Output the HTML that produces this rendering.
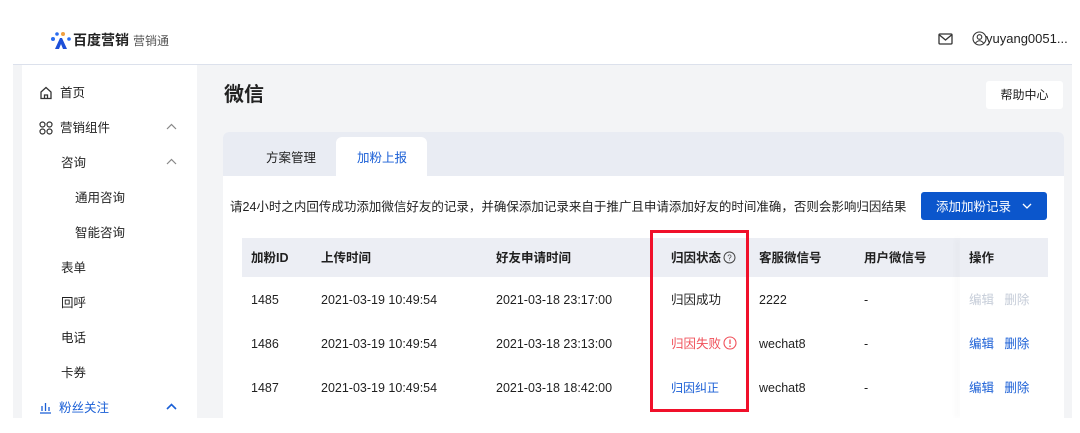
<!DOCTYPE html>
<html><head><meta charset="utf-8"><style>
*{margin:0;padding:0;box-sizing:border-box}
body{width:1080px;height:433px;background:#fff;font-family:"Liberation Sans","Noto Sans CJK SC",sans-serif;color:#1f1f1f;position:relative;overflow:hidden;font-size:12.5px}
.abs{position:absolute}
.t{position:absolute;white-space:nowrap;line-height:16px}
</style></head><body>
<svg class="abs" style="left:50px;top:31px" width="22" height="20" viewBox="0 0 22 20">
<circle cx="3" cy="8" r="2" fill="#2a6cf0"/><circle cx="7" cy="3" r="1.8" fill="#2a6cf0"/><circle cx="13" cy="3" r="2" fill="#f0a040"/><circle cx="19" cy="8" r="1.8" fill="#2a6cf0"/>
<path d="M10 7 L5 18 L9 18 L11 13 L13 18 L17 18 L12 7 Z" fill="#1d4fd8"/></svg>
<div class="t" style="left:73px;top:32px;font-size:14px;font-weight:bold;color:#222">百度营销</div>
<div class="t" style="left:133px;top:33px;font-size:12px;color:#555">营销通</div>
<svg class="abs" style="left:938px;top:33px" width="15" height="12" viewBox="0 0 15 12"><rect x="1" y="1" width="13" height="10" rx="1" fill="none" stroke="#333" stroke-width="1.3"/><path d="M1.5 2 L7.5 7 L13.5 2" fill="none" stroke="#333" stroke-width="1.3"/></svg>
<svg class="abs" style="left:972px;top:31px" width="15" height="15" viewBox="0 0 15 15"><circle cx="7.5" cy="7.5" r="6.5" fill="none" stroke="#333" stroke-width="1.1"/><circle cx="7.5" cy="6" r="2.3" fill="none" stroke="#333" stroke-width="1.1"/><path d="M3.5 12 Q7.5 7.5 11.5 12" fill="none" stroke="#333" stroke-width="1.1"/></svg>
<div class="t" style="left:986px;top:31px;font-size:13px;color:#222">yuyang0051...</div>
<div class="abs" style="left:13px;top:64px;width:1059px;height:1px;background:#dce1ec"></div>
<div class="abs" style="left:13px;top:65px;width:9px;height:353px;background:#f3f4f6"></div>
<div class="abs" style="left:197px;top:65px;width:875px;height:353px;background:#f3f4f6"></div>
<svg class="abs" style="left:39px;top:86px" width="14" height="14" viewBox="0 0 14 14"><path d="M2 6 L7 1.5 L12 6 V12.5 H2 Z M5.5 12.5 V9 H8.5 V12.5" fill="none" stroke="#333" stroke-width="1.3"/></svg>
<div class="t" style="left:60px;top:85px">首页</div>
<svg class="abs" style="left:39px;top:121px" width="14" height="14" viewBox="0 0 14 14"><g fill="none" stroke="#333" stroke-width="1.2"><circle cx="3.5" cy="3.5" r="2.5"/><circle cx="10.5" cy="3.5" r="2.5"/><circle cx="3.5" cy="10.5" r="2.5"/><circle cx="10.5" cy="10.5" r="2.5"/></g></svg>
<div class="t" style="left:60px;top:120px">营销组件</div>
<svg class="abs" style="left:166px;top:123px" width="11" height="7"><path d="M1 6 L5.5 1.5 L10 6" fill="none" stroke="#888" stroke-width="1.2"/></svg>
<div class="t" style="left:61px;top:155px">咨询</div>
<svg class="abs" style="left:166px;top:158px" width="11" height="7"><path d="M1 6 L5.5 1.5 L10 6" fill="none" stroke="#888" stroke-width="1.2"/></svg>
<div class="t" style="left:75px;top:190px">通用咨询</div>
<div class="t" style="left:75px;top:225px">智能咨询</div>
<div class="t" style="left:61px;top:260px">表单</div>
<div class="t" style="left:61px;top:295px">回呼</div>
<div class="t" style="left:61px;top:330px">电话</div>
<div class="t" style="left:61px;top:365px">卡券</div>
<svg class="abs" style="left:39px;top:402px" width="13" height="12" viewBox="0 0 13 12"><path d="M1 11 H12 M3 9 V4 M6.5 9 V1 M10 9 V5" stroke="#1a5fd6" stroke-width="1.3" fill="none"/></svg>
<div class="t" style="left:59px;top:400px;color:#1a5fd6">粉丝关注</div>
<svg class="abs" style="left:166px;top:403px" width="11" height="7"><path d="M1 6 L5.5 1.5 L10 6" fill="none" stroke="#1a5fd6" stroke-width="1.6"/></svg>
<div class="t" style="left:224px;top:84px;font-size:20px;line-height:22px;font-weight:bold;color:#222">微信</div>
<div class="abs" style="left:986px;top:81px;width:77px;height:28px;background:#fff;border-radius:3px;font-size:12px;text-align:center;line-height:28px">帮助中心</div>
<div class="abs" style="left:223px;top:132px;width:841px;height:286px;background:#fff;border-radius:6px 6px 0 0;overflow:hidden">
 <div class="abs" style="left:0;top:0;width:841px;height:44px;background:#e9ecf3"></div>
 <div class="abs" style="left:113px;top:5px;width:91px;height:40px;background:#fff;border-radius:6px 6px 0 0"></div>
 <div class="t" style="left:43px;top:18px">方案管理</div>
 <div class="t" style="left:134px;top:18px;color:#1a5fd6">加粉上报</div>
 <div class="t" style="left:7px;top:67px;font-size:12.5px">请24小时之内回传成功添加微信好友的记录，并确保添加记录来自于推广且申请添加好友的时间准确，否则会影响归因结果</div>
 <div class="abs" style="left:698px;top:60px;width:126px;height:28px;background:#0b56cc;border-radius:3px"></div>
 <div class="t" style="left:713px;top:67px;color:#fff">添加加粉记录</div>
 <svg class="abs" style="left:799px;top:71px" width="10" height="6"><path d="M1 1 L5 5 L9 1" fill="none" stroke="#fff" stroke-width="1.3"/></svg>
 <div class="abs" style="left:19px;top:106px;width:806px;height:39px;background:#eceef4"></div>
 <div class="abs" style="left:737px;top:106px;width:1px;height:180px;box-shadow:-3px 0 6px rgba(0,0,0,0.12)"></div>
 <div class="abs" style="left:738px;top:106px;width:87px;height:39px;background:#eceef4"></div>
 <div class="abs" style="left:738px;top:145px;width:87px;height:141px;background:#fff"></div>
</div>
<div style="font-weight:bold">
<div class="t" style="left:251px;top:250px">加粉ID</div>
<div class="t" style="left:321px;top:250px">上传时间</div>
<div class="t" style="left:496px;top:250px">好友申请时间</div>
<div class="t" style="left:671px;top:250px">归因状态</div>
<div class="t" style="left:759px;top:250px">客服微信号</div>
<div class="t" style="left:864px;top:250px">用户微信号</div>
<div class="t" style="left:969px;top:250px">操作</div>
</div>
<svg class="abs" style="left:723px;top:251px" width="13" height="13" viewBox="0 0 13 13"><circle cx="6.5" cy="6.5" r="5.5" fill="none" stroke="#444" stroke-width="1"/><text x="6.5" y="9.5" font-size="8" text-anchor="middle" fill="#444" font-family="Liberation Sans">?</text></svg>
<div class="t" style="left:251px;top:292px">1485</div><div class="t" style="left:321px;top:292px">2021-03-19 10:49:54</div><div class="t" style="left:496px;top:292px">2021-03-18 23:17:00</div><div class="t" style="left:671px;top:292px">归因成功</div><div class="t" style="left:759px;top:292px">2222</div><div class="t" style="left:864px;top:292px">-</div><div class="t" style="left:969px;top:292px;color:#c5ccd8">编辑&nbsp;&nbsp;&nbsp;删除</div>
<div class="t" style="left:251px;top:336px">1486</div><div class="t" style="left:321px;top:336px">2021-03-19 10:49:54</div><div class="t" style="left:496px;top:336px">2021-03-18 23:13:00</div><div class="t" style="left:671px;top:336px;color:#f0505a">归因失败</div><div class="t" style="left:759px;top:336px">wechat8</div><div class="t" style="left:864px;top:336px">-</div><div class="t" style="left:969px;top:336px;color:#1a5fd6">编辑&nbsp;&nbsp;&nbsp;删除</div>
<svg class="abs" style="left:723px;top:336px" width="14" height="14" viewBox="0 0 14 14"><circle cx="7" cy="7" r="6" fill="none" stroke="#f0505a" stroke-width="1.1"/><path d="M7 3.5 V8" stroke="#f0505a" stroke-width="1.3"/><circle cx="7" cy="10.2" r="0.8" fill="#f0505a"/></svg>
<div class="t" style="left:671px;top:380px;color:#1a5fd6;font-size:12px">归因纠正</div>
<div class="t" style="left:251px;top:380px">1487</div><div class="t" style="left:321px;top:380px">2021-03-19 10:49:54</div><div class="t" style="left:496px;top:380px">2021-03-18 18:42:00</div><div class="t" style="left:759px;top:380px">wechat8</div><div class="t" style="left:864px;top:380px">-</div><div class="t" style="left:969px;top:380px;color:#1a5fd6">编辑&nbsp;&nbsp;&nbsp;删除</div>
<div class="abs" style="left:650px;top:230px;width:99px;height:182px;border:3px solid #f0102a"></div>
</body></html>
